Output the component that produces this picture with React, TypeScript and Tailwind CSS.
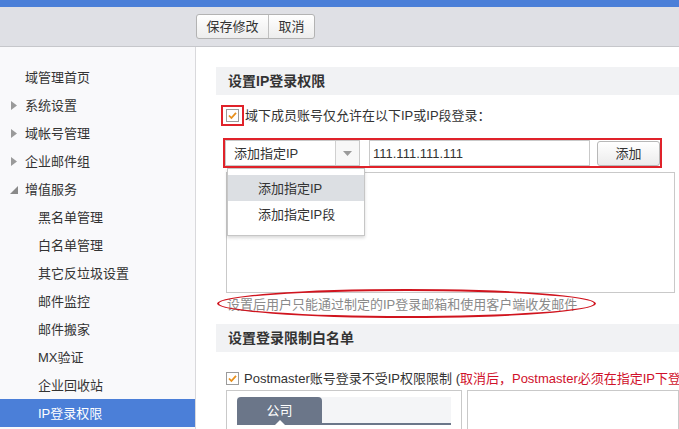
import React from "react";

const FONT = { fontFamily: '"Liberation Sans", "Noto Sans CJK SC", sans-serif' };

function Check() {
  return (
    <svg width="13" height="13" viewBox="0 0 13 13" className="block shrink-0">
      <rect x="0.5" y="0.5" width="12" height="12" fill="#fff" stroke="#9b9b9b" />
      <path d="M3 6.5 L5.4 9 L10 3.8" fill="none" stroke="#e8901c" strokeWidth="1.8" />
    </svg>
  );
}

function ArrowRight() {
  return (
    <svg width="6" height="9" viewBox="0 0 6 9" className="block">
      <path d="M0 0 L6 4.5 L0 9 Z" fill="#9a9a9a" />
    </svg>
  );
}

function ArrowDown() {
  return (
    <svg width="8" height="8" viewBox="0 0 8 8" className="block">
      <path d="M8 0 L8 8 L0 8 Z" fill="#8a8a8a" />
    </svg>
  );
}

type Item = { label: string; level: 0 | 1; arrow?: "right" | "down"; active?: boolean };

const items: Item[] = [
  { label: "域管理首页", level: 0 },
  { label: "系统设置", level: 0, arrow: "right" },
  { label: "域帐号管理", level: 0, arrow: "right" },
  { label: "企业邮件组", level: 0, arrow: "right" },
  { label: "增值服务", level: 0, arrow: "down" },
  { label: "黑名单管理", level: 1 },
  { label: "白名单管理", level: 1 },
  { label: "其它反垃圾设置", level: 1 },
  { label: "邮件监控", level: 1 },
  { label: "邮件搬家", level: 1 },
  { label: "MX验证", level: 1 },
  { label: "企业回收站", level: 1 },
  { label: "IP登录权限", level: 1, active: true },
];

export default function App() {
  return (
    <div className="w-[679px] h-[429px] overflow-hidden flex flex-col bg-white text-[13px] text-[#333]" style={FONT}>
      <div className="h-[7px] bg-[#4b7fd8] shrink-0" />
      <div className="h-[40px] shrink-0 bg-[#dfe0e5] border-b border-[#c6c7cb] flex items-center pl-[196px]">
        <div className="flex h-[25px] mt-[-1px] rounded-[3px] border border-[#b3b3b3] overflow-hidden bg-gradient-to-b from-[#ffffff] to-[#ededed]">
          <button className="w-[72px] h-full text-[13px] text-[#333] leading-none border-r border-[#c0c0c0]">保存修改</button>
          <button className="w-[45px] h-full text-[13px] text-[#333] leading-none">取消</button>
        </div>
      </div>
      <div className="flex flex-1 min-h-0">
        <aside className="w-[196px] shrink-0 bg-[#f9f9fb] border-r border-[#d9d9dc] pt-[16px]">
          {items.map((it) => (
            <div
              key={it.label}
              className={
                "h-[28px] flex items-center relative " +
                (it.active ? "bg-[#4b7fd8] text-white" : "text-[#333]") +
                (it.level === 0 ? " pl-[25px]" : " pl-[38px]")
              }
            >
              {it.arrow === "right" && (
                <span className="absolute left-[11px] top-[10px]">
                  <ArrowRight />
                </span>
              )}
              {it.arrow === "down" && (
                <span className="absolute left-[10px] top-[11px]">
                  <ArrowDown />
                </span>
              )}
              <span className="leading-none">{it.label}</span>
            </div>
          ))}
        </aside>
        <main className="flex-1 min-w-0 pl-[20px] pt-[20px] overflow-hidden">
          <div className="h-[28px] bg-[#f1f2f4] flex items-center pl-[12px] font-bold text-[14px] text-[#333]">
            设置IP登录权限
          </div>
          <div className="mt-[10px] flex items-center h-[21px]">
            <div className="ml-[5px] w-[23px] h-[21px] border-2 border-[#e0222a] flex items-center justify-center">
              <Check />
            </div>
            <span className="ml-[1px] leading-none">域下成员账号仅允许在以下IP或IP段登录：</span>
          </div>
          <div className="relative mt-[12px]">
            <div className="ml-[7px] w-[439px] h-[30px] border-2 border-[#e0222a] flex items-center">
              <div className="w-[135px] h-[26px] border border-[#c9c9c9] bg-white flex items-stretch">
                <div className="flex-1 flex items-center pl-[8px] leading-none">添加指定IP</div>
                <div className="w-[24px] border-l border-[#d0d0d0] bg-[#f7f7f7] flex items-center justify-center">
                  <svg width="9" height="5" viewBox="0 0 9 5">
                    <path d="M0 0 L9 0 L4.5 5 Z" fill="#9a9a9a" />
                  </svg>
                </div>
              </div>
              <div className="ml-[9px] w-[221px] h-[26px] border border-[#c9c9c9] bg-white flex items-center pl-[3px] leading-none text-[#333]">
                111.111.111.111
              </div>
              <button className="ml-[7px] w-[63px] h-[25px] rounded-[3px] border border-[#b8b8b8] bg-gradient-to-b from-[#ffffff] to-[#ececec] leading-none text-[#333]">
                添加
              </button>
            </div>
            <div className="mt-[4px] ml-[10px] mr-[4px] h-[121px] border border-[#c9c9c9]" />
            <div className="absolute left-[11px] top-[30px] w-[138px] bg-white border border-[#c6c6c6] shadow-[0_2px_3px_rgba(0,0,0,0.15)] pt-[6px] pb-[7px]">
              <div className="h-[26px] bg-[#dcdfe3] flex items-center pl-[30px] leading-none">添加指定IP</div>
              <div className="h-[27px] flex items-center pl-[30px] leading-none">添加指定IP段</div>
            </div>
          </div>
          <div className="relative h-[23px] flex items-center">
            <span className="ml-[11px] leading-none text-[#8a8a8a] whitespace-nowrap">设置后用户只能通过制定的IP登录邮箱和使用客户端收发邮件</span>
            <div className="absolute left-[1px] top-[-4px] w-[379px] h-[29px] rounded-[50%] border-2 border-[#d0141e]" />
          </div>
          <div className="mt-[8px] h-[28px] bg-[#f1f2f4] flex items-center pl-[12px] font-bold text-[14px] text-[#333]">
            设置登录限制白名单
          </div>
          <div className="mt-[19px] ml-[10px] flex items-center h-[14px] whitespace-nowrap">
            <Check />
            <span className="ml-[5px] leading-none">Postmaster账号登录不受IP权限限制 (</span>
            <span className="leading-none text-[#d0112b]">取消后，Postmaster必须在指定IP下登录</span>
          </div>
          <div className="mt-[5px] ml-[10px] flex gap-[5px]">
            <div className="w-[236px] h-[60px] shrink-0 border border-[#c9c9c9] pt-[6px] px-[10px]">
              <div className="h-[28px] bg-[#f4f5f7] border-b-2 border-[#6b7689] flex">
                <div className="relative w-[85px] h-full rounded-t-[4px] bg-[#6b7689] text-white flex items-center justify-center leading-none">
                  公司
                  <span className="absolute bottom-[-2px] left-1/2 -translate-x-1/2 w-0 h-0 border-x-[5px] border-x-transparent border-b-[5px] border-b-white" />
                </div>
              </div>
            </div>
            <div className="flex-1 h-[60px] border border-[#c9c9c9]" />
          </div>
        </main>
      </div>
    </div>
  );
}
